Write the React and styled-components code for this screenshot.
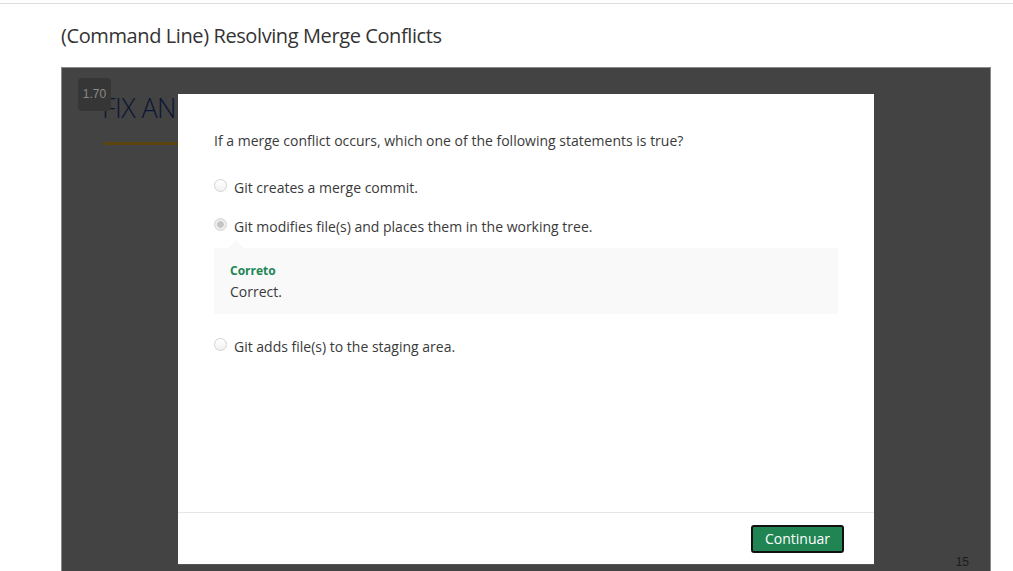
import React from 'react';
import styled, { createGlobalStyle } from 'styled-components';

const Global = createGlobalStyle`
  html, body {
    margin: 0;
    padding: 0;
    background: #fff;
    overflow: hidden;
    font-family: "Open Sans", "Liberation Sans", sans-serif;
    color: #333;
  }
`;

const options = [
  { id: 1, text: 'Git creates a merge commit.' },
  { id: 2, text: 'Git modifies file(s) and places them in the working tree.', checked: true, feedback: { title: 'Correto', body: 'Correct.' } },
  { id: 3, text: 'Git adds file(s) to the staging area.' },
];

const App = () => (
  <Page>
    <Global />
    <TopBar />
    <Title>(Command Line) Resolving Merge Conflicts</Title>
    <Player>
      <Slide>
        <SpeedBadge>1.70</SpeedBadge>
        <SlideHeading>FIX AND RESOLVE</SlideHeading>
        <SlideRule />
        <PageNumber>15</PageNumber>
      </Slide>
      <Modal>
        <ModalBody>
          <Question>If a merge conflict occurs, which one of the following statements is true?</Question>
          {options.map(o => (
            <Option key={o.id}>
              <Choice>
                <Radio checked={o.checked} />
                <span>{o.text}</span>
              </Choice>
              {o.feedback && (
                <Feedback>
                  <FeedbackTitle>{o.feedback.title}</FeedbackTitle>
                  <FeedbackText>{o.feedback.body}</FeedbackText>
                </Feedback>
              )}
            </Option>
          ))}
        </ModalBody>
        <ModalFooter>
          <Button>Continuar</Button>
        </ModalFooter>
      </Modal>
    </Player>
  </Page>
);

const Page = styled.div`
  width: 1013px;
  height: 571px;
  overflow: hidden;
`;

const TopBar = styled.div`
  height: 3px;
  border-bottom: 1px solid #dedede;
`;

const Title = styled.h1`
  margin: 0;
  padding: 18px 0 0 61px;
  height: 45px;
  font-size: 20px;
  font-weight: 400;
  letter-spacing: -0.4px;
  line-height: 28px;
  color: #333;
`;

const Player = styled.div`
  position: relative;
  margin-left: 61px;
  width: 928px;
  height: 520px;
  border: 1px solid #8a8a8a;
  background: #434343;
`;

const Slide = styled.div`
  height: 100%;
  padding: 10px 0 0 16px;
  box-sizing: border-box;
  position: relative;
`;

const SpeedBadge = styled.div`
  position: absolute;
  left: 16px;
  top: 10px;
  width: 33px;
  height: 33px;
  border-radius: 4px;
  background: #363636;
  color: #8a8a8a;
  font-family: "Liberation Sans", Arial, sans-serif;
  font-size: 12px;
  padding-top: 9px;
  box-sizing: border-box;
  text-align: center;
  z-index: 1;
`;

const SlideHeading = styled.div`
  margin: 14px 0 0 24px;
  font-family: "Open Sans", sans-serif;
  font-size: 27px;
  font-weight: 300;
  letter-spacing: -0.6px;
  line-height: 32px;
  color: #0b1633;
  white-space: nowrap;
`;

const SlideRule = styled.div`
  margin: 18px 0 0 25px;
  width: 200px;
  height: 3px;
  background: #5a4410;
`;

const PageNumber = styled.div`
  position: absolute;
  right: 21px;
  top: 487px;
  font-family: "Liberation Sans", Arial, sans-serif;
  font-size: 12px;
  color: #1c1c1c;
`;

const Modal = styled.div`
  position: absolute;
  left: 116px;
  top: 26px;
  width: 696px;
  height: 470px;
  background: #fff;
  display: flex;
  flex-direction: column;
  box-shadow: 0 1px 0 #555;
`;

const ModalBody = styled.div`
  flex: 1;
  padding: 37px 36px 0 36px;
`;

const Question = styled.p`
  margin: 0 0 27px;
  font-size: 14px;
  line-height: 20px;
  color: #3a3a3a;
`;

const Option = styled.div`
  margin-bottom: 19px;
`;

const Choice = styled.label`
  display: flex;
  align-items: center;
  gap: 7px;
  font-size: 14px;
  line-height: 20px;
  color: #3a3a3a;
`;

const Radio = styled.span`
  width: 13px;
  height: 13px;
  border-radius: 50%;
  box-sizing: border-box;
  border: 1px solid #d3d3d3;
  background: ${p => (p.checked ? 'radial-gradient(circle, #c4c4c4 0 3px, #ececec 3.5px)' : 'linear-gradient(#fff, #f1f1f1)')};
  margin-top: -6px;
  flex-shrink: 0;
`;

const Feedback = styled.div`
  position: relative;
  margin-top: 11px;
  background: #f9f9f9;
  padding: 15px 16px 12px;
  margin-bottom: 23px;
  &::before {
    content: '';
    position: absolute;
    left: 14px;
    top: -8px;
    border-left: 8px solid transparent;
    border-right: 8px solid transparent;
    border-bottom: 8px solid #f9f9f9;
  }
`;

const FeedbackTitle = styled.div`
  font-size: 12px;
  font-weight: 700;
  line-height: 16px;
  color: #218553;
`;

const FeedbackText = styled.div`
  margin-top: 3px;
  font-size: 14px;
  line-height: 20px;
  color: #3a3a3a;
`;

const ModalFooter = styled.div`
  height: 51px;
  border-top: 1px solid #e5e5e5;
  display: flex;
  justify-content: flex-end;
  align-items: center;
  padding-right: 30px;
`;

const Button = styled.button`
  height: 28px;
  padding: 0 12px;
  background: #218553;
  border: 2px solid #111;
  border-radius: 3px;
  color: #fff;
  font-family: "Open Sans", sans-serif;
  font-size: 14px;
  line-height: 20px;
  margin-top: 1px;
`;

export default App;
